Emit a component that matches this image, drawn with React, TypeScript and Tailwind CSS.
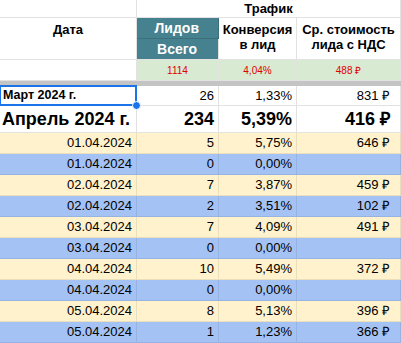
import React from 'react';

const rows = [
  { d: '01.04.2024', n: '5', c: '5,75%', p: '646 ₽' },
  { d: '01.04.2024', n: '0', c: '0,00%', p: '' },
  { d: '02.04.2024', n: '7', c: '3,87%', p: '459 ₽' },
  { d: '02.04.2024', n: '2', c: '3,51%', p: '102 ₽' },
  { d: '03.04.2024', n: '7', c: '4,09%', p: '491 ₽' },
  { d: '03.04.2024', n: '0', c: '0,00%', p: '' },
  { d: '04.04.2024', n: '10', c: '5,49%', p: '372 ₽' },
  { d: '04.04.2024', n: '0', c: '0,00%', p: '' },
  { d: '05.04.2024', n: '8', c: '5,13%', p: '396 ₽' },
  { d: '05.04.2024', n: '1', c: '1,23%', p: '366 ₽' },
];

const cell = 'border-r border-b border-[#e2e2e2] flex items-center';

export default function App() {
  return (
    <div
      className="w-[401px] h-[343px] overflow-hidden bg-white text-black text-[13px]"
      style={{ fontFamily: '"Liberation Sans", Arial, sans-serif' }}
    >
      <div className="grid grid-cols-[137px_82px_78px_104px]">
        {/* header row 1 */}
        <div className={`${cell} h-[18px]`} />
        <div className={`${cell} col-span-3 h-[18px] justify-center font-bold`}>Трафик</div>

        {/* header rows 2-3 */}
        <div className={`${cell} row-span-2 items-start justify-center pt-[4px] leading-[15px] font-bold`}>Дата</div>
        <div className="h-[21px] bg-[#45818e] border-r border-b border-[#3b6f7a] flex items-center justify-end pr-[19px] font-bold text-[14px] text-white">
          Лидов
        </div>
        <div className={`${cell} row-span-2 flex-col items-center justify-start pt-[4px] leading-[15px] font-bold`}>
          <span>Конверсия</span>
          <span>в лид</span>
        </div>
        <div className={`${cell} row-span-2 flex-col items-center justify-start pt-[4px] leading-[15px] font-bold`}>
          <span>Ср. стоимость</span>
          <span>лида с НДС</span>
        </div>
        <div className="h-[21px] bg-[#45818e] border-r border-b border-[#e2e2e2] flex items-center justify-end pr-[21px] font-bold text-[14px] text-white">
          Всего
        </div>

        {/* totals row */}
        <div className={`${cell} h-[21px]`} />
        <div className={`${cell} h-[21px] bg-[#d9ead3] justify-center text-[10px] text-[#e00000]`}>1114</div>
        <div className={`${cell} h-[21px] bg-[#d9ead3] justify-center text-[10px] text-[#e00000]`}>4,04%</div>
        <div className={`${cell} h-[21px] bg-[#d9ead3] justify-center text-[10px] text-[#e00000]`}>488 ₽</div>

        {/* frozen divider */}
        <div className="col-span-4 h-[5px] bg-[#c4c4c4]" />

        {/* March */}
        <div className={`${cell} relative h-[20px] pl-[3px] font-bold text-[12.5px]`}>
          Март 2024 г.
          <div className="absolute -left-px -top-px right-[-1px] bottom-[-1px] border-2 border-[#1a73e8]" />
          <div className="absolute right-[-5px] bottom-[-5px] w-[9px] h-[9px] rounded-full bg-[#1a73e8] border border-white z-10" />
        </div>
        <div className={`${cell} h-[20px] justify-end pr-[4px]`}>26</div>
        <div className={`${cell} h-[20px] justify-end pr-[4px]`}>1,33%</div>
        <div className={`${cell} h-[20px] justify-end pr-[10px]`}>831 ₽</div>

        {/* April */}
        <div className={`${cell} h-[27px] pl-[2px] font-bold text-[18px]`}>Апрель 2024 г.</div>
        <div className={`${cell} h-[27px] justify-end pr-[4px] font-bold text-[18px]`}>234</div>
        <div className={`${cell} h-[27px] justify-end pr-[4px] font-bold text-[18px]`}>5,39%</div>
        <div className={`${cell} h-[27px] justify-end pr-[10px] font-bold text-[18px]`}>416 ₽</div>

        {rows.map((r, i) => {
          const bg = i % 2 === 0 ? 'bg-[#fff2cc] border-[#eadfbd]' : 'bg-[#a4c2f4] border-[#97b3e2]';
          return (
            <React.Fragment key={i}>
              <div className={`h-[21px] border-r border-b flex items-center justify-end pr-[4px] ${bg}`}>{r.d}</div>
              <div className={`h-[21px] border-r border-b flex items-center justify-end pr-[4px] ${bg}`}>{r.n}</div>
              <div className={`h-[21px] border-r border-b flex items-center justify-end pr-[4px] ${bg}`}>{r.c}</div>
              <div className={`h-[21px] border-r border-b flex items-center justify-end pr-[10px] ${bg}`}>{r.p}</div>
            </React.Fragment>
          );
        })}
      </div>
    </div>
  );
}
